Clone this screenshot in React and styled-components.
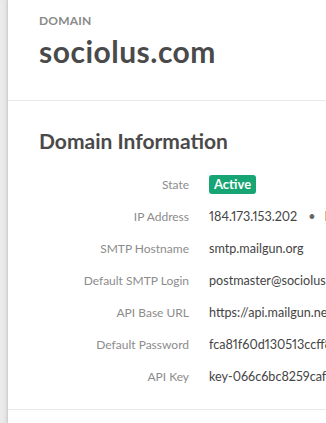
import React from "react";
import styled, { createGlobalStyle } from "styled-components";

const Global = createGlobalStyle`
  html, body {
    margin: 0;
    padding: 0;
    background: #fff;
    overflow: hidden;
  }
  body {
    font-family: Lato, "Open Sans", sans-serif;
    color: #444;
    font-variant-numeric: proportional-nums;
  }
`;

const Page = styled.div`
  display: flex;
  min-height: 423px;
`;

const Rail = styled.div`
  width: 8px;
  flex-shrink: 0;
  background: linear-gradient(to right, #ececec 0%, #e6e6e6 70%, #d9d9d9 100%);
`;

const Panel = styled.div`
  flex: 1;
  min-width: 0;
  background: #fff;
  box-shadow: -1px 0 3px rgba(0, 0, 0, 0.08);
`;

const Header = styled.header`
  padding: 13px 0 0 31px;
  height: 87px;
  border-bottom: 1px solid #e9e9e9;
`;

const Eyebrow = styled.div`
  font-size: 12px;
  font-weight: 700;
  letter-spacing: 0.2px;
  color: #8a8a8a;
  line-height: 16px;
`;

const DomainName = styled.h1`
  margin: 4px 0 0;
  font-size: 30px;
  font-weight: 700;
  color: #4a4a4a;
  line-height: 36px;
  letter-spacing: 0.5px;
`;

const Section = styled.section`
  padding: 27px 0 0 31px;
  height: 281px;
  border-bottom: 1px solid #e9e9e9;
`;

const SectionTitle = styled.h2`
  margin: 0 0 21px;
  font-size: 21px;
  font-weight: 700;
  color: #4a4a4a;
  line-height: 26px;
`;

const Rows = styled.dl`
  margin: 0;
  display: grid;
  grid-template-columns: 150px 1fr;
  column-gap: 20px;
  row-gap: 13px;
  line-height: 19px;
`;

const Label = styled.dt`
  text-align: right;
  color: #8c8c8c;
  font-size: 12px;
  white-space: nowrap;
`;

const Value = styled.dd`
  margin: 0;
  color: #444;
  font-size: 12.6px;
  white-space: nowrap;
  overflow: hidden;
`;

const Badge = styled.span`
  display: inline-block;
  background: #17a673;
  color: #fff;
  font-weight: 700;
  font-size: 13px;
  line-height: 19px;
  padding: 0 5px;
  border-radius: 3px;
`;

const Dot = styled.span`
  margin: 0 9px 0 11px;
  color: #666;
`;

const rows = [
  { label: "State", value: <Badge>Active</Badge> },
  {
    label: "IP Address",
    value: (
      <>
        184.173.153.202<Dot>•</Dot>Manage IPs
      </>
    ),
  },
  { label: "SMTP Hostname", value: "smtp.mailgun.org" },
  { label: "Default SMTP Login", value: "postmaster@sociolus.com" },
  { label: "API Base URL", value: "https://api.mailgun.net/v3/sociolus.com" },
  { label: "Default Password", value: "fca81f60d130513ccff8a4b2" },
  { label: "API Key", value: "key-066c6bc8259caf7e1d3a" },
];

export default function App() {
  return (
    <>
      <Global />
      <Page>
        <Rail />
        <Panel>
          <Header>
            <Eyebrow>DOMAIN</Eyebrow>
            <DomainName>sociolus.com</DomainName>
          </Header>
          <Section>
            <SectionTitle>Domain Information</SectionTitle>
            <Rows>
              {rows.map((r) => (
                <React.Fragment key={r.label}>
                  <Label>{r.label}</Label>
                  <Value>{r.value}</Value>
                </React.Fragment>
              ))}
            </Rows>
          </Section>
        </Panel>
      </Page>
    </>
  );
}
